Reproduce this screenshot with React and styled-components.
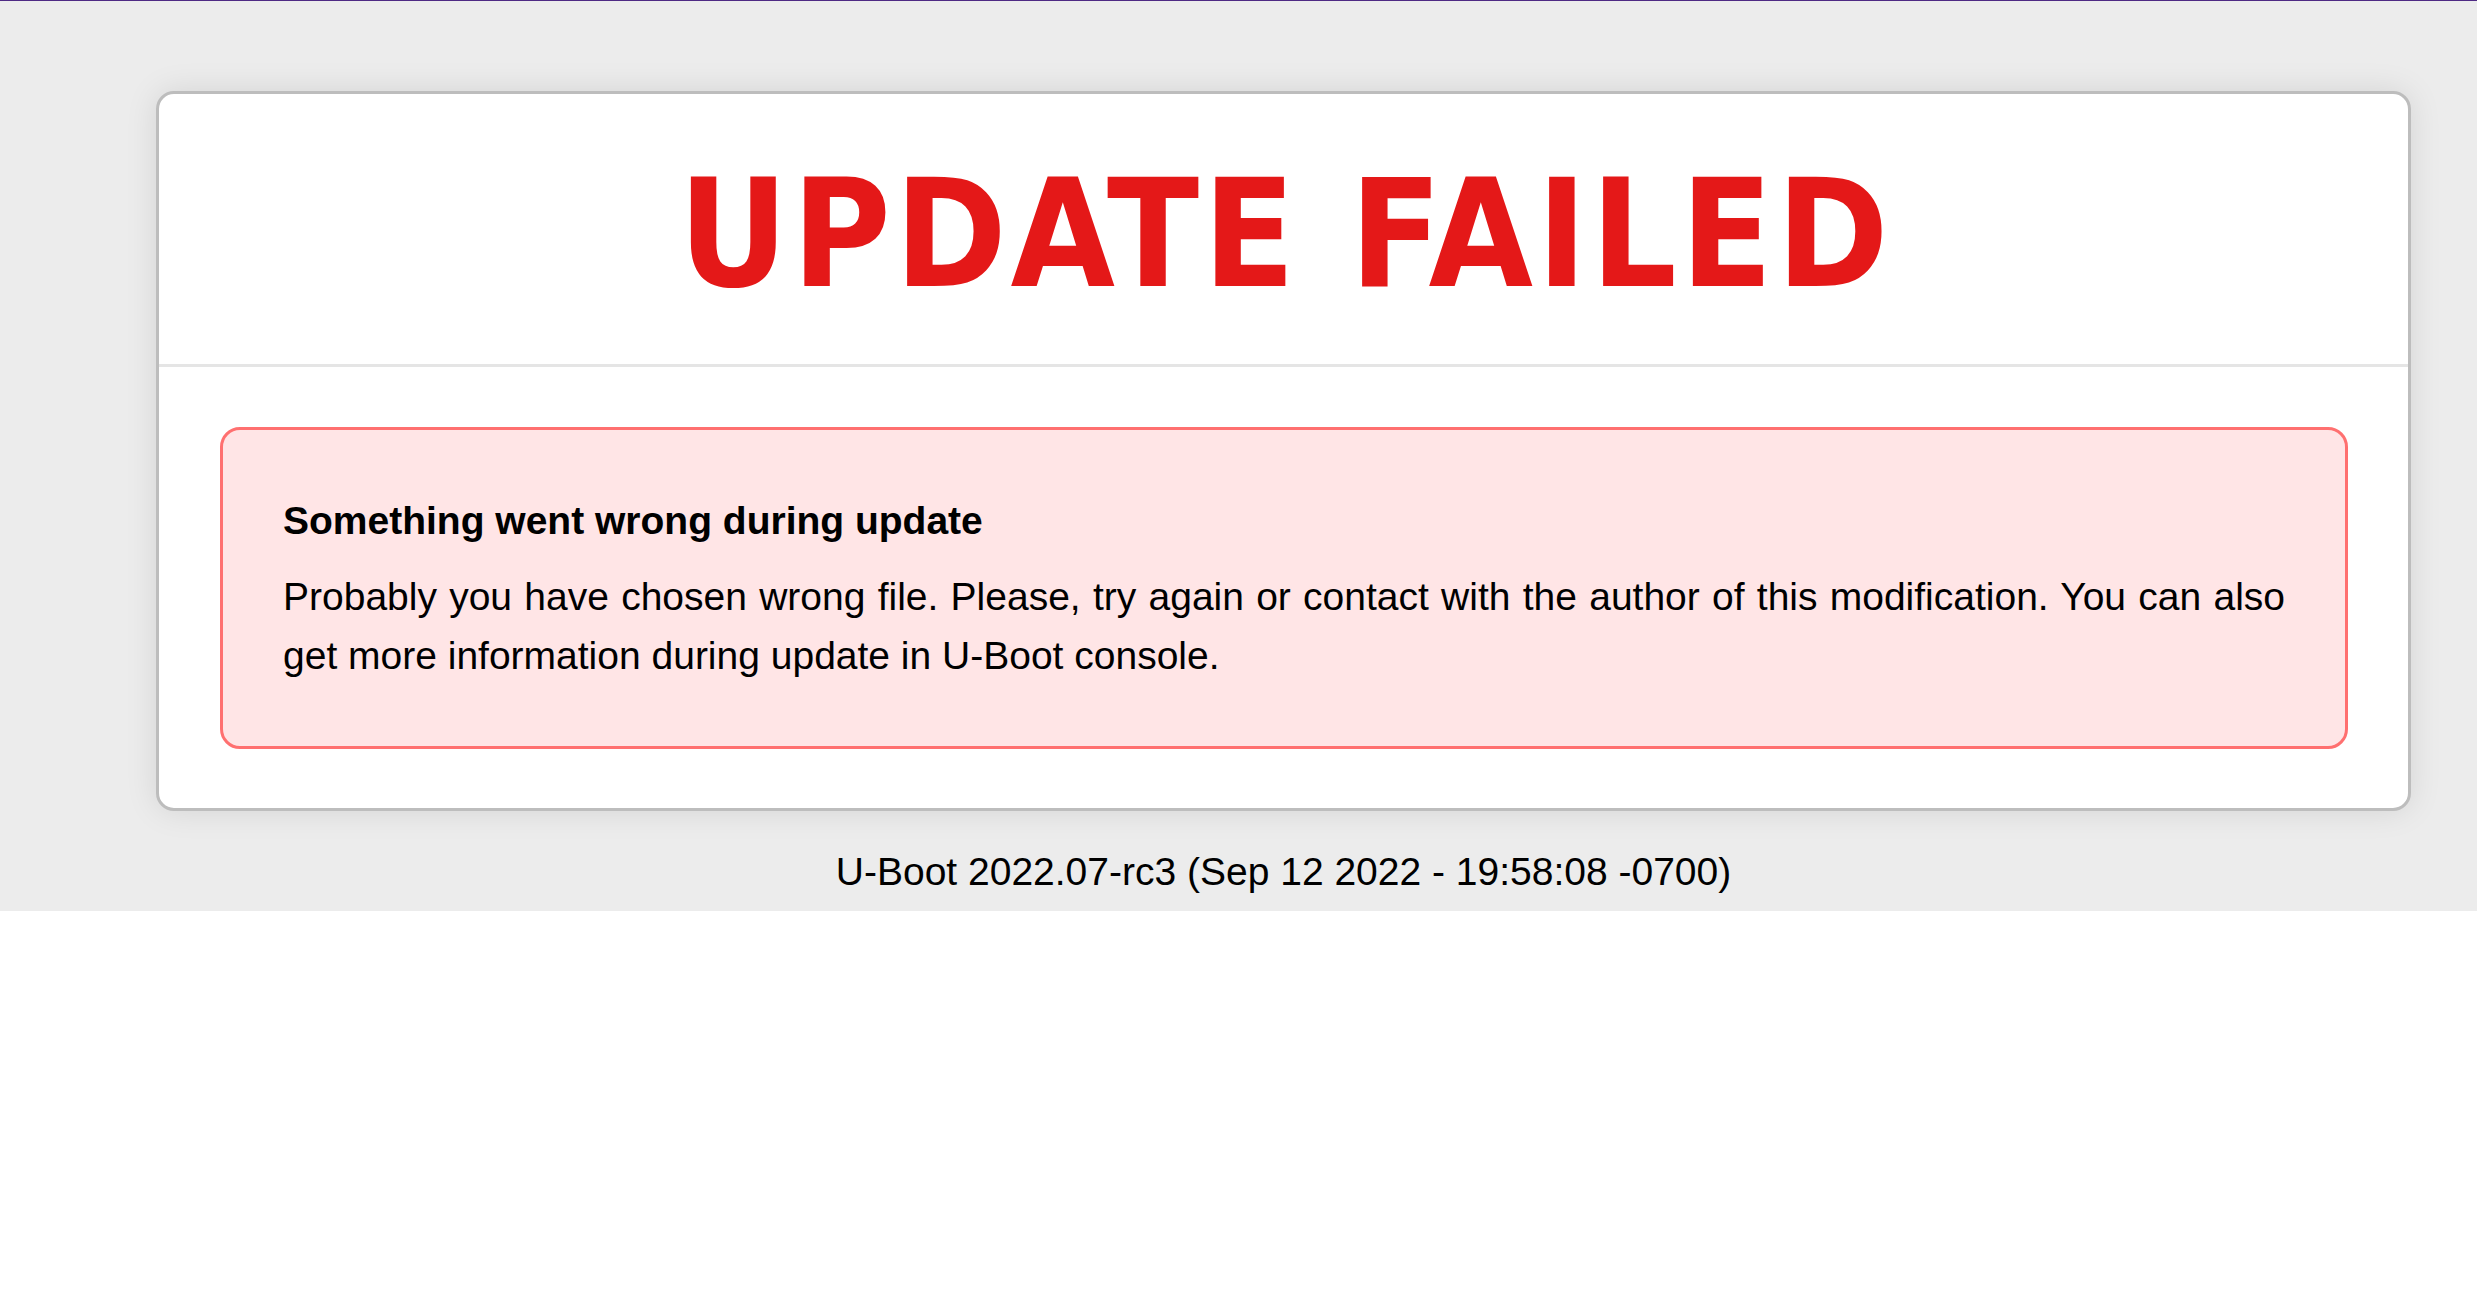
import React from "react";
import styled, { createGlobalStyle } from "styled-components";

const GlobalStyle = createGlobalStyle`
  html, body {
    margin: 0;
    padding: 0;
    background: #ffffff;
  }
  body {
    font-family: "Liberation Sans", Arial, sans-serif;
    color: #000;
  }
`;

// grey band that holds the card and the version line
const Page = styled.div`
  border-top: 1px solid #4e2a84;
  background-color: #ececec;
  padding: 90px 66px 9px 156px;
`;

const Card = styled.div`
  background-color: #fff;
  border: 3px solid #bdbdbd;
  border-radius: 18px;
  box-shadow: 0 0 32px rgba(0, 0, 0, 0.1);
  overflow: hidden;
`;

const Header = styled.div`
  padding: 53px 20px 42px;
  border-bottom: 3px solid #e5e5e5;
  text-align: center;
`;

const Title = styled.h1`
  margin: 0;
  padding-left: 4px;
  font-family: "DejaVu Sans Condensed", "DejaVu Sans", Verdana, sans-serif;
  font-stretch: condensed;
  font-size: 150px;
  font-weight: 700;
  line-height: 1.164;
  letter-spacing: 3.8px;
  color: #e41818;
`;

const Body = styled.div`
  padding: 60px 60px 59px 61px;
`;

const Alert = styled.div`
  background-color: #ffe5e6;
  border: 3px solid #ff7070;
  border-radius: 20px;
  padding: 62px 60px 61px 60px;
`;

const AlertTitle = styled.h2`
  margin: 0 0 18px;
  font-size: 39px;
  font-weight: 700;
  line-height: 1.5;
`;

const AlertText = styled.p`
  margin: 0;
  font-size: 39px;
  line-height: 1.5;
  text-align: justify;
`;

const Version = styled.div`
  margin-top: 32px;
  font-size: 39px;
  line-height: 1.5;
  text-align: center;
`;

const App = () => {
  return (
    <>
      <GlobalStyle />
      <Page>
        <Card>
          <Header>
            <Title>UPDATE FAILED</Title>
          </Header>
          <Body>
            <Alert>
              <AlertTitle>Something went wrong during update</AlertTitle>
              <AlertText>
                Probably you have chosen wrong file. Please, try again or contact
                with the author of this modification. You can also get more
                information during update in U-Boot console.
              </AlertText>
            </Alert>
          </Body>
        </Card>
        <Version>U-Boot 2022.07-rc3 (Sep 12 2022 - 19:58:08 -0700)</Version>
      </Page>
    </>
  );
};

export default App;
